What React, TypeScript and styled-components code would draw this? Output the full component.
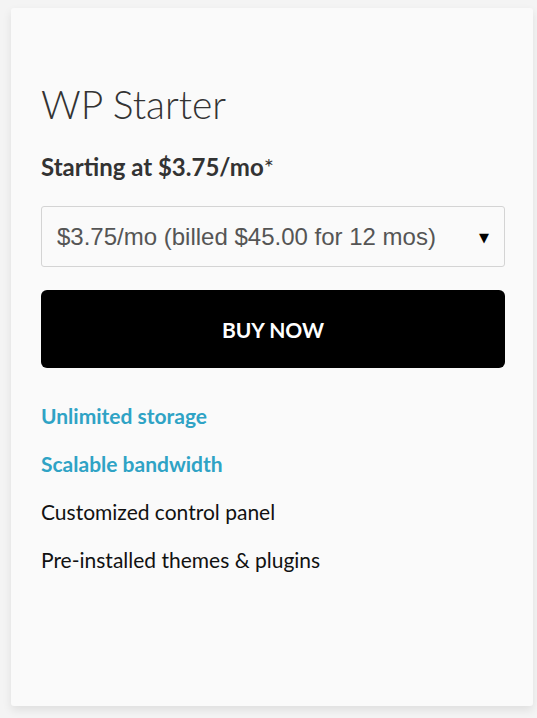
import styled, { createGlobalStyle } from 'styled-components';

const GlobalStyle = createGlobalStyle`
    html, body {
        margin: 0;
        padding: 0;
        background: #f4f4f4;
    }
    * {
        box-sizing: border-box;
    }
`;

const Page = styled.div`
    padding: 8px 4px 12px 11px;
`;

const Card = styled.div`
    height: 698px;
    background: #fafafa;
    border-radius: 3px;
    box-shadow: 0 4px 10px rgba(0, 0, 0, 0.09);
    padding: 72px 28px 0 30px;
    font-family: Lato, 'Open Sans', sans-serif;
`;

const PlanName = styled.h2`
    margin: 0;
    font-size: 39px;
    font-weight: 300;
    line-height: 48px;
    color: #333;
`;

const StartingPrice = styled.div`
    margin-top: 24px;
    font-size: 24px;
    font-weight: 700;
    line-height: 30px;
    color: #333;

    span {
        font-weight: 400;
    }
`;

const SelectWrap = styled.div`
    position: relative;
    margin-top: 24px;
`;

const TermSelect = styled.select`
    appearance: none;
    width: 100%;
    height: 61px;
    padding: 0 40px 0 15px;
    border: 1px solid #d4d4d4;
    border-radius: 3px;
    background: #fafafa;
    font-family: 'Liberation Sans', Arial, sans-serif;
    font-size: 24px;
    color: #555;
`;

const Caret = styled.span`
    position: absolute;
    right: 16px;
    top: 50%;
    transform: translateY(-50%);
    font-family: 'DejaVu Sans', sans-serif;
    font-size: 13px;
    color: #000;
    pointer-events: none;
`;

const BuyButton = styled.button`
    display: block;
    width: 100%;
    height: 78px;
    margin-top: 23px;
    border: none;
    border-radius: 6px;
    background: #000;
    color: #fff;
    font-family: Lato, sans-serif;
    font-size: 21px;
    font-weight: 700;
    cursor: pointer;
`;

const Features = styled.ul`
    list-style: none;
    margin: 24px 0 0;
    padding: 0;
`;

const Feature = styled.li<{ $highlight?: boolean }>`
    font-size: 21px;
    line-height: 48px;
    font-weight: ${p => (p.$highlight ? 700 : 400)};
    color: ${p => (p.$highlight ? '#2fa3c5' : '#111')};
`;

const features = [
    { text: 'Unlimited storage', highlight: true },
    { text: 'Scalable bandwidth', highlight: true },
    { text: 'Customized control panel', highlight: false },
    { text: 'Pre-installed themes & plugins', highlight: false },
];

export default function App() {
    return (
        <>
            <GlobalStyle />
            <Page>
                <Card>
                    <PlanName>WP Starter</PlanName>
                    <StartingPrice>
                        Starting at $3.75/mo<span>*</span>
                    </StartingPrice>
                    <SelectWrap>
                        <TermSelect defaultValue="12">
                            <option value="12">$3.75/mo (billed $45.00 for 12 mos)</option>
                            <option value="24">$3.45/mo (billed $82.80 for 24 mos)</option>
                            <option value="36">$2.95/mo (billed $106.20 for 36 mos)</option>
                        </TermSelect>
                        <Caret>▼</Caret>
                    </SelectWrap>
                    <BuyButton>BUY NOW</BuyButton>
                    <Features>
                        {features.map(f => (
                            <Feature key={f.text} $highlight={f.highlight}>
                                {f.text}
                            </Feature>
                        ))}
                    </Features>
                </Card>
            </Page>
        </>
    );
}
